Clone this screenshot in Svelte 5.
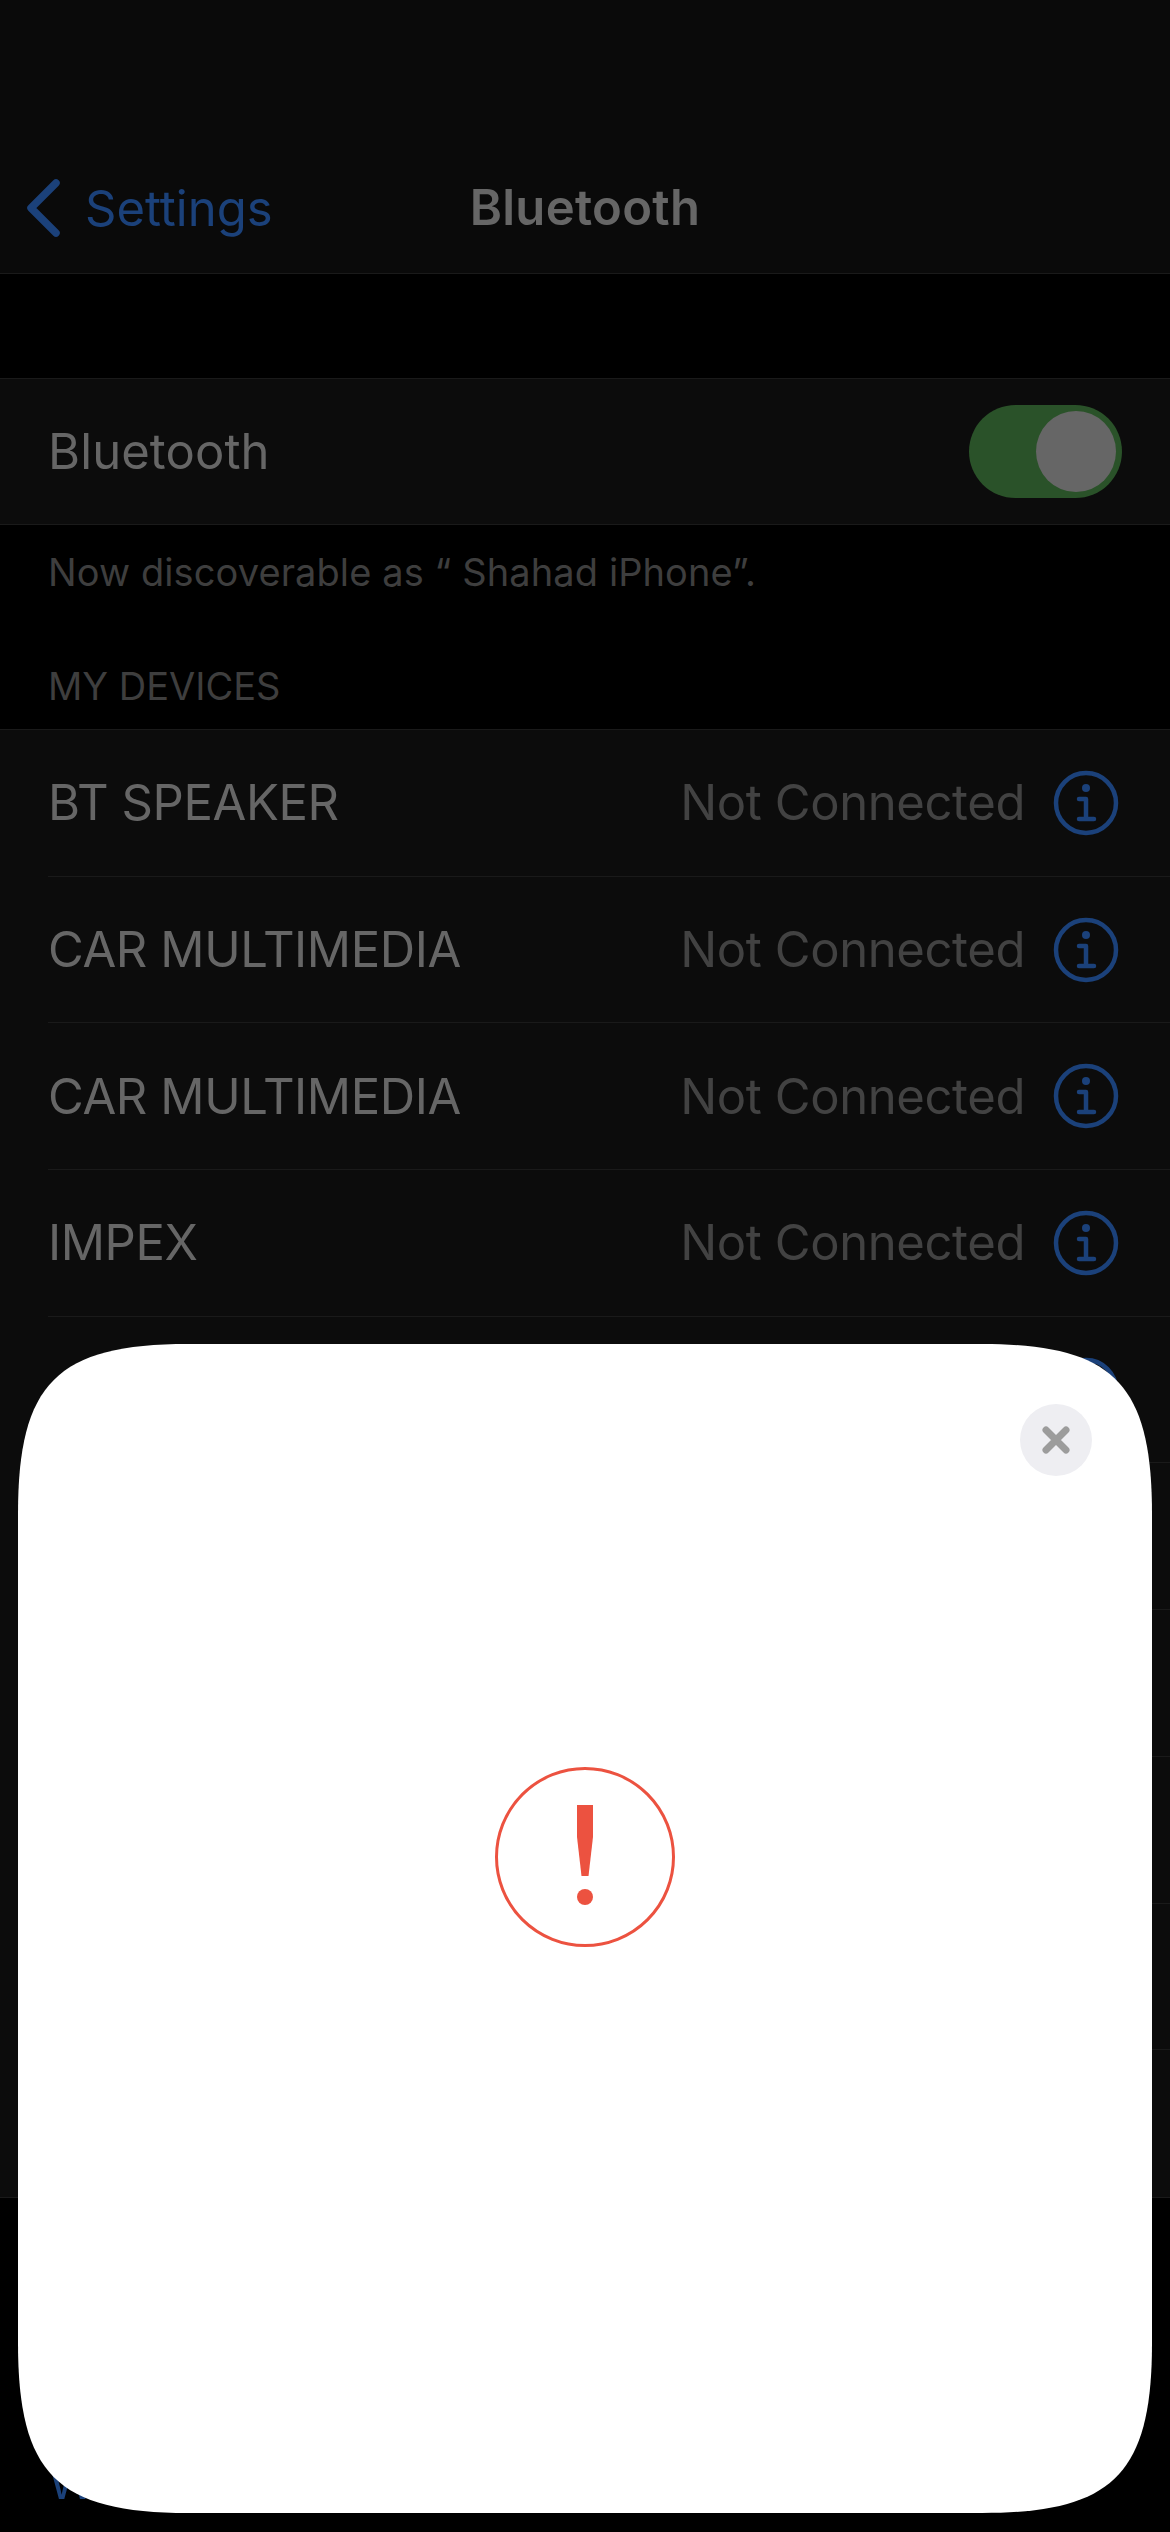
<script lang="ts">
  // names past the fourth row sit behind the sheet and can't be read
  const devices = ['BT SPEAKER', 'CAR MULTIMEDIA', 'CAR MULTIMEDIA', 'IMPEX', '', '', '', '', '', ''];

  // continuous corners of the sheet, 1134 x 1169
  const w = 1134;
  const h = 1169;
  const r = 170;
  const c = 39;
  const sheetPath = `M${r} 0H${w - r}C${w - c} 0 ${w} ${c} ${w} ${r}V${h - r}C${w} ${h - c} ${w - c} ${h} ${w - r} ${h}H${r}C${c} ${h} 0 ${h - c} 0 ${h - r}V${r}C0 ${c} ${c} 0 ${r} 0Z`;
</script>

<div class="page">
  <header class="nav">
    <div class="back">
      <svg class="chevron" width="40" height="60" viewBox="0 2 40 60" fill="none">
        <path d="M32 7 7 32l25 25" stroke="#1b417a" stroke-width="7.5" stroke-linecap="round" stroke-linejoin="round" />
      </svg>
      <span class="back-label">Settings</span>
    </div>
    <h1 class="title">Bluetooth</h1>
  </header>

  <section class="group first">
    <div class="toggle-row">
      <span class="toggle-name">Bluetooth</span>
      <div class="switch"><div class="knob"></div></div>
    </div>
  </section>
  <p class="note">Now discoverable as “ Shahad iPhone”.</p>

  <h2 class="section-head">MY DEVICES</h2>
  <section class="group">
    {#each devices as name}
      <div class="device">
        <div class="device-inner">
          <span class="row-name">{name}</span>
          <span class="status">Not Connected</span>
          <svg class="info" width="66" height="66" viewBox="0 0 66 66" fill="none">
            <circle cx="33" cy="33" r="30" stroke="#1b417a" stroke-width="4.5" />
            <circle cx="33" cy="18" r="4" fill="#1b417a" />
            <path d="M26 29h7v20M26 49h15" stroke="#1b417a" stroke-width="4.5" stroke-linecap="round" stroke-linejoin="round" />
          </svg>
        </div>
      </div>
    {/each}
  </section>

  <p class="link">W</p>
</div>

<div class="sheet" style="clip-path: path('{sheetPath}')">
  <button class="close" aria-label="Close">
    <svg width="28" height="28" viewBox="0 0 28 28" fill="none">
      <path d="M4 4l20 20M24 4 4 24" stroke="#9c9c9c" stroke-width="7" stroke-linecap="round" />
    </svg>
  </button>
  <svg class="alert" width="182" height="182" viewBox="0 0 182 182" fill="none">
    <circle cx="91" cy="91" r="88.5" stroke="#ec5240" stroke-width="3" />
    <path d="M83 39h16v32l-4.500 39h-7L83 71z" fill="#ec5240" />
    <circle cx="91" cy="131" r="8" fill="#ec5240" />
  </svg>
</div>

<style>
  :global(body) {
    margin: 0;
    background: #000;
  }

  .page {
    width: 1170px;
    height: 2532px;
    overflow: hidden;
    background: #000;
    font-family: Inter, 'Liberation Sans', sans-serif;
    color: #666;
  }

  .nav {
    height: 274px;
    box-sizing: border-box;
    background: #0a0a0a;
    border-bottom: 1px solid #1a1a1a;
    display: grid;
    grid-template-columns: 1fr auto 1fr;
    align-items: end;
    padding-bottom: 35px;
  }

  .back {
    display: flex;
    align-items: center;
    padding-left: 24px;
    gap: 21px;
    color: #1b417a;
    font-size: 49px;
  }

  .title {
    margin: 0;
    font-size: 49px;
    line-height: 60px;
    font-weight: 600;
    letter-spacing: 0.3px;
  }

  .group {
    background: #0c0c0c;
    border-top: 1px solid #1a1a1a;
    border-bottom: 1px solid #1a1a1a;
  }

  .group.first {
    margin-top: 104px;
  }

  .toggle-row {
    height: 145px;
    display: flex;
    align-items: center;
    justify-content: space-between;
    padding: 0 48px;
  }

  .toggle-name {
    font-size: 49px;
    letter-spacing: 0.1px;
  }

  .row-name {
    font-size: 49px;
    letter-spacing: -0.4px;
  }

  .switch {
    width: 153px;
    height: 93px;
    border-radius: 47px;
    background: #2a5229;
    display: flex;
    align-items: center;
    justify-content: flex-end;
    padding-right: 6px;
    box-sizing: border-box;
  }

  .knob {
    width: 80px;
    height: 81px;
    border-radius: 50%;
    background: #666;
  }

  .note {
    margin: 0;
    padding: 25px 48px 0;
    font-size: 38px;
    line-height: 44px;
    letter-spacing: 0.1px;
    color: #3e3e3e;
  }

  .section-head {
    margin: 0;
    padding: 70px 48px 21px;
    font-size: 38px;
    line-height: 44px;
    font-weight: 400;
    color: #3e3e3e;
  }

  .device {
    padding-left: 48px;
    height: 146.700px;
    box-sizing: border-box;
  }

  .device:not(:last-child) .device-inner {
    border-bottom: 1px solid #1a1a1a;
  }

  .device-inner {
    height: 100%;
    box-sizing: border-box;
    display: flex;
    align-items: center;
    padding-right: 51px;
  }

  .status {
    margin-left: auto;
    font-size: 49px;
    letter-spacing: -0.4px;
    color: #424242;
  }

  .info {
    margin-left: 28px;
  }

  .link {
    margin: 0;
    padding: 254px 48px 0;
    font-size: 49px;
    line-height: 60px;
    color: #1b417a;
  }

  .sheet {
    position: absolute;
    left: 18px;
    top: 1344px;
    width: 1134px;
    height: 1169px;
    background: #fff;
    display: flex;
    align-items: center;
    justify-content: center;
  }

  .close {
    position: absolute;
    top: 60px;
    right: 60px;
    width: 72px;
    height: 72px;
    padding: 0;
    border: none;
    border-radius: 50%;
    background: #eeeef2;
    display: flex;
    align-items: center;
    justify-content: center;
  }

  .alert {
    margin-bottom: 143px;
  }
</style>
